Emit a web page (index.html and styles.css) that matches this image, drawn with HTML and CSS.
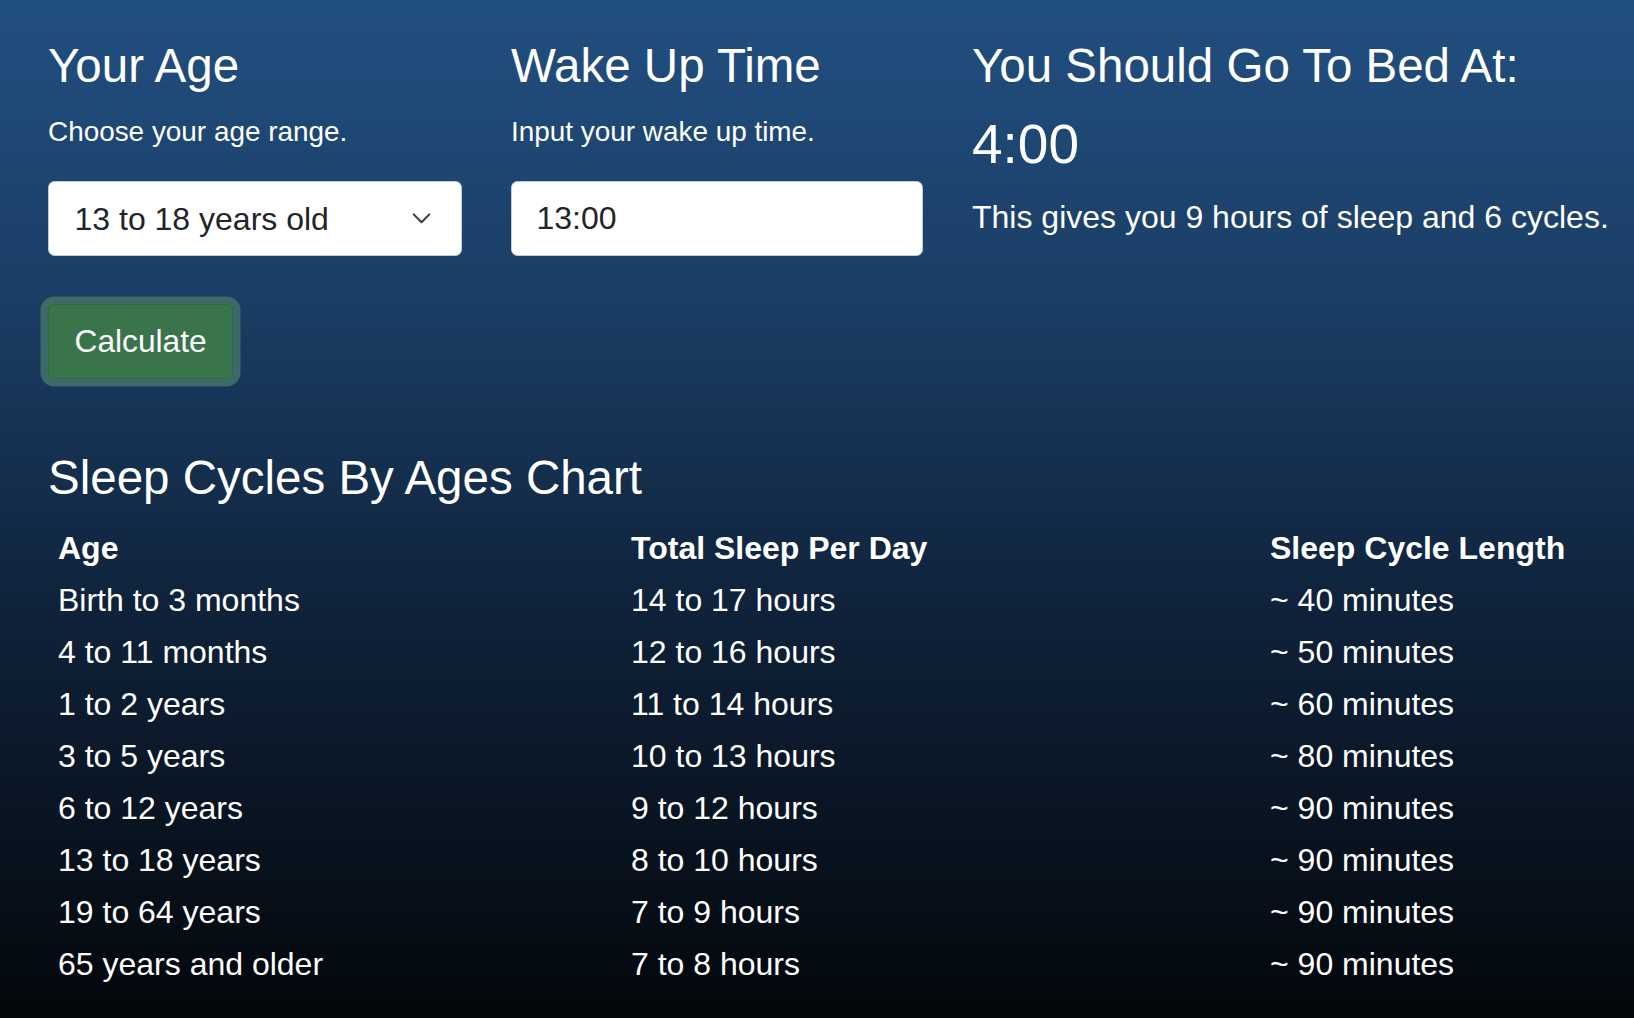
FILE: index.html
```html
<!DOCTYPE html>
<html lang="en">
<head>
<meta charset="utf-8">
<title>Sleep Calculator</title>
<link rel="stylesheet" href="styles.css">
</head>
<body>
<main class="page">
  <section class="calc">
    <div class="field">
      <h2 class="title">Your Age</h2>
      <p class="hint">Choose your age range.</p>
      <div class="select-wrap">
        <select class="control select">
          <option>13 to 18 years old</option>
        </select>
        <svg class="chevron" viewBox="0 0 20 12" aria-hidden="true"><path d="M1.5 1.5 L10 10 L18.5 1.5"/></svg>
      </div>
    </div>
    <div class="field">
      <h2 class="title">Wake Up Time</h2>
      <p class="hint">Input your wake up time.</p>
      <input class="control" type="text" value="13:00">
    </div>
    <div class="result">
      <h2 class="title">You Should Go To Bed At:</h2>
      <p class="time">4:00</p>
      <p class="summary">This gives you 9 hours of sleep and 6 cycles.</p>
    </div>
  </section>

  <button class="btn" type="button">Calculate</button>

  <h2 class="title chart-title">Sleep Cycles By Ages Chart</h2>
  <table class="chart">
    <colgroup>
      <col class="c-age">
      <col class="c-total">
      <col class="c-cycle">
    </colgroup>
    <thead>
      <tr><th>Age</th><th>Total Sleep Per Day</th><th>Sleep Cycle Length</th></tr>
    </thead>
    <tbody>
      <tr><td>Birth to 3 months</td><td>14 to 17 hours</td><td>~ 40 minutes</td></tr>
      <tr><td>4 to 11 months</td><td>12 to 16 hours</td><td>~ 50 minutes</td></tr>
      <tr><td>1 to 2 years</td><td>11 to 14 hours</td><td>~ 60 minutes</td></tr>
      <tr><td>3 to 5 years</td><td>10 to 13 hours</td><td>~ 80 minutes</td></tr>
      <tr><td>6 to 12 years</td><td>9 to 12 hours</td><td>~ 90 minutes</td></tr>
      <tr><td>13 to 18 years</td><td>8 to 10 hours</td><td>~ 90 minutes</td></tr>
      <tr><td>19 to 64 years</td><td>7 to 9 hours</td><td>~ 90 minutes</td></tr>
      <tr><td>65 years and older</td><td>7 to 8 hours</td><td>~ 90 minutes</td></tr>
    </tbody>
  </table>
</main>
</body>
</html>
```

FILE: styles.css
```css
html {
  height: 100%;
}

body {
  margin: 0;
  min-height: 100%;
  font-family: "Liberation Sans", Arial, Helvetica, sans-serif;
  color: #ffffff;
  background: linear-gradient(180deg, #214f80 0%, #1a3d64 30%, #0f223a 60%, #03070b 100%);
  background-attachment: fixed;
}

.page {
  padding: 38px 20px 0 48px;
  box-sizing: border-box;
  min-height: 1018px;
}

.calc {
  display: grid;
  grid-template-columns: 414px 412px 1fr;
  column-gap: 49px;
  align-items: start;
}

.title {
  margin: 0;
  font-size: 47.5px;
  line-height: 56px;
  font-weight: 400;
}

.hint {
  margin: 16.7px 0 29.3px;
  font-size: 27.9px;
  line-height: 41.25px;
}

.select-wrap {
  position: relative;
}

.control {
  display: block;
  box-sizing: border-box;
  width: 100%;
  height: 75px;
  margin: 0;
  padding: 0 24.5px;
  border: 1px solid #c4cbd3;
  border-radius: 6.5px;
  background: #ffffff;
  color: #212529;
  font-family: inherit;
  font-size: 32px;
  outline: none;
}

.select {
  appearance: none;
  -webkit-appearance: none;
  padding-left: 25.5px;
}

.chevron {
  position: absolute;
  right: 31px;
  top: 50%;
  width: 19px;
  height: 11px;
  margin-top: -5.5px;
  pointer-events: none;
  fill: none;
  stroke: #343a40;
  stroke-width: 2.2;
  stroke-linecap: round;
  stroke-linejoin: round;
}

.time {
  margin: 16.8px 0 0;
  font-size: 55px;
  line-height: 66px;
}

.summary {
  margin: 16.6px 0 0;
  font-size: 32px;
  line-height: 48px;
  white-space: nowrap;
}

.btn {
  display: block;
  box-sizing: border-box;
  margin: 48px 0 0;
  height: 75px;
  padding: 0 25.5px;
  border: 1px solid #30683f;
  border-radius: 6.5px;
  background: #3a744b;
  color: #ffffff;
  font-family: inherit;
  font-size: 31.7px;
  box-shadow: 0 0 0 7.5px #3b6a69;
}

.chart-title {
  margin-top: 70.5px;
}

.chart {
  margin-top: 16.5px;
  border-collapse: collapse;
  table-layout: fixed;
  width: 1538px;
  font-size: 32px;
  line-height: 52px;
}

.c-age { width: 573px; }
.c-total { width: 639px; }
.c-cycle { width: 326px; }

.chart th,
.chart td {
  padding: 0 10px;
  text-align: left;
  white-space: nowrap;
}

.chart th {
  font-weight: 700;
}
```
